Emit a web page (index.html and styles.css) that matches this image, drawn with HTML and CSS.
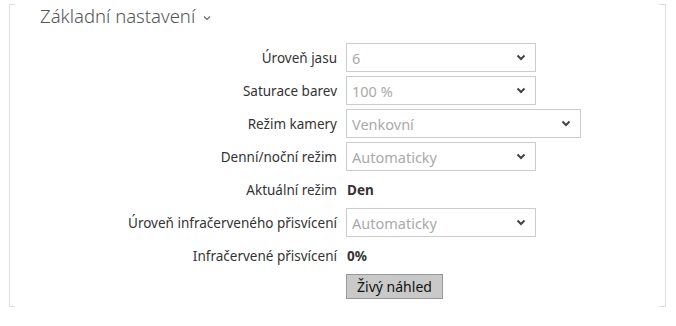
FILE: index.html
```html
<!DOCTYPE html>
<html lang="cs">
<head>
    <meta charset="UTF-8">
    <meta name="viewport" content="width=device-width, initial-scale=1.0">
    <title>Základní nastavení</title>
    <link rel="stylesheet" href="styles.css">
</head>
<body>
    <section class="panel">
        <h2 class="panel-title">Základní nastavení
            <svg class="title-chevron" width="8" height="6" viewBox="0 0 8 6"><path d="M1 1.5 L4 4.5 L7 1.5" fill="none" stroke="#666" stroke-width="1.2"/></svg>
        </h2>

        <div class="form">
            <label class="form-label">Úroveň jasu</label>
            <div class="select">
                <select><option>6</option></select>
                <svg class="select-arrow" width="10" height="7" viewBox="0 0 10 7"><path d="M1.5 1.5 L5 5 L8.5 1.5" fill="none" stroke="#444" stroke-width="2"/></svg>
            </div>

            <label class="form-label">Saturace barev</label>
            <div class="select">
                <select><option>100 %</option></select>
                <svg class="select-arrow" width="10" height="7" viewBox="0 0 10 7"><path d="M1.5 1.5 L5 5 L8.5 1.5" fill="none" stroke="#444" stroke-width="2"/></svg>
            </div>

            <label class="form-label">Režim kamery</label>
            <div class="select wide">
                <select><option>Venkovní</option></select>
                <svg class="select-arrow" width="10" height="7" viewBox="0 0 10 7"><path d="M1.5 1.5 L5 5 L8.5 1.5" fill="none" stroke="#444" stroke-width="2"/></svg>
            </div>

            <label class="form-label">Denní/noční režim</label>
            <div class="select">
                <select><option>Automaticky</option></select>
                <svg class="select-arrow" width="10" height="7" viewBox="0 0 10 7"><path d="M1.5 1.5 L5 5 L8.5 1.5" fill="none" stroke="#444" stroke-width="2"/></svg>
            </div>

            <span class="form-label">Aktuální režim</span>
            <span class="value">Den</span>

            <label class="form-label">Úroveň infračerveného přisvícení</label>
            <div class="select">
                <select><option>Automaticky</option></select>
                <svg class="select-arrow" width="10" height="7" viewBox="0 0 10 7"><path d="M1.5 1.5 L5 5 L8.5 1.5" fill="none" stroke="#444" stroke-width="2"/></svg>
            </div>

            <span class="form-label">Infračervené přisvícení</span>
            <span class="value">0%</span>

            <span></span>
            <div class="actions"><button class="btn">Živý náhled</button></div>
        </div>
    </section>
</body>
</html>
```

FILE: styles.css
```css
/* General */
body {
    margin: 0;
    font-family: 'Noto Sans', 'Open Sans', sans-serif;
    color: #333;
    background-color: #fff;
}

/* Frame with corner ticks */
.panel {
    box-sizing: border-box;
    width: 657px;
    height: 303px;
    margin: 17px 0 0 9px;
    border-left: 1px solid #ddd;
    border-right: 1px solid #ddd;
    background:
        linear-gradient(#ddd, #ddd) left top / 5px 1px no-repeat,
        linear-gradient(#ddd, #ddd) right top / 6px 1px no-repeat,
        linear-gradient(#ddd, #ddd) left bottom / 5px 1px no-repeat,
        linear-gradient(#ddd, #ddd) right bottom / 6px 1px no-repeat;
}

.panel-title {
    margin: -13px 0 0 30px;
    font-size: 18.5px;
    font-weight: 300;
    color: #555;
    line-height: 24px;
    display: flex;
    align-items: center;
    gap: 8px;
}

.title-chevron {
    margin-top: 3px;
}

/* Form rows */
.form {
    display: grid;
    grid-template-columns: 327px auto;
    grid-auto-rows: 29px;
    column-gap: 9px;
    row-gap: 4px;
    align-items: center;
    margin-top: 15px;
    font-size: 13.5px;
}

.form-label {
    text-align: right;
    white-space: nowrap;
}

.value {
    font-weight: bold;
    padding-left: 1px;
}

.select {
    position: relative;
    width: 190px;
    height: 29px;
}

.select.wide {
    width: 235px;
}

.select select {
    appearance: none;
    box-sizing: border-box;
    width: 100%;
    height: 100%;
    margin: 0;
    padding: 0 24px 0 5px;
    border: 1px solid #ccc;
    border-radius: 0;
    background-color: #fff;
    font-family: inherit;
    font-size: 14.5px;
    color: #aaa;
}

.select-arrow {
    position: absolute;
    right: 10px;
    top: 11px;
    pointer-events: none;
}

.actions {
    align-self: start;
}

.btn {
    box-sizing: border-box;
    width: 97px;
    height: 25px;
    padding: 0;
    border: 1px solid #999;
    background-color: #c9c9c9;
    font-family: inherit;
    font-size: 14px;
    color: #111;
}
```
